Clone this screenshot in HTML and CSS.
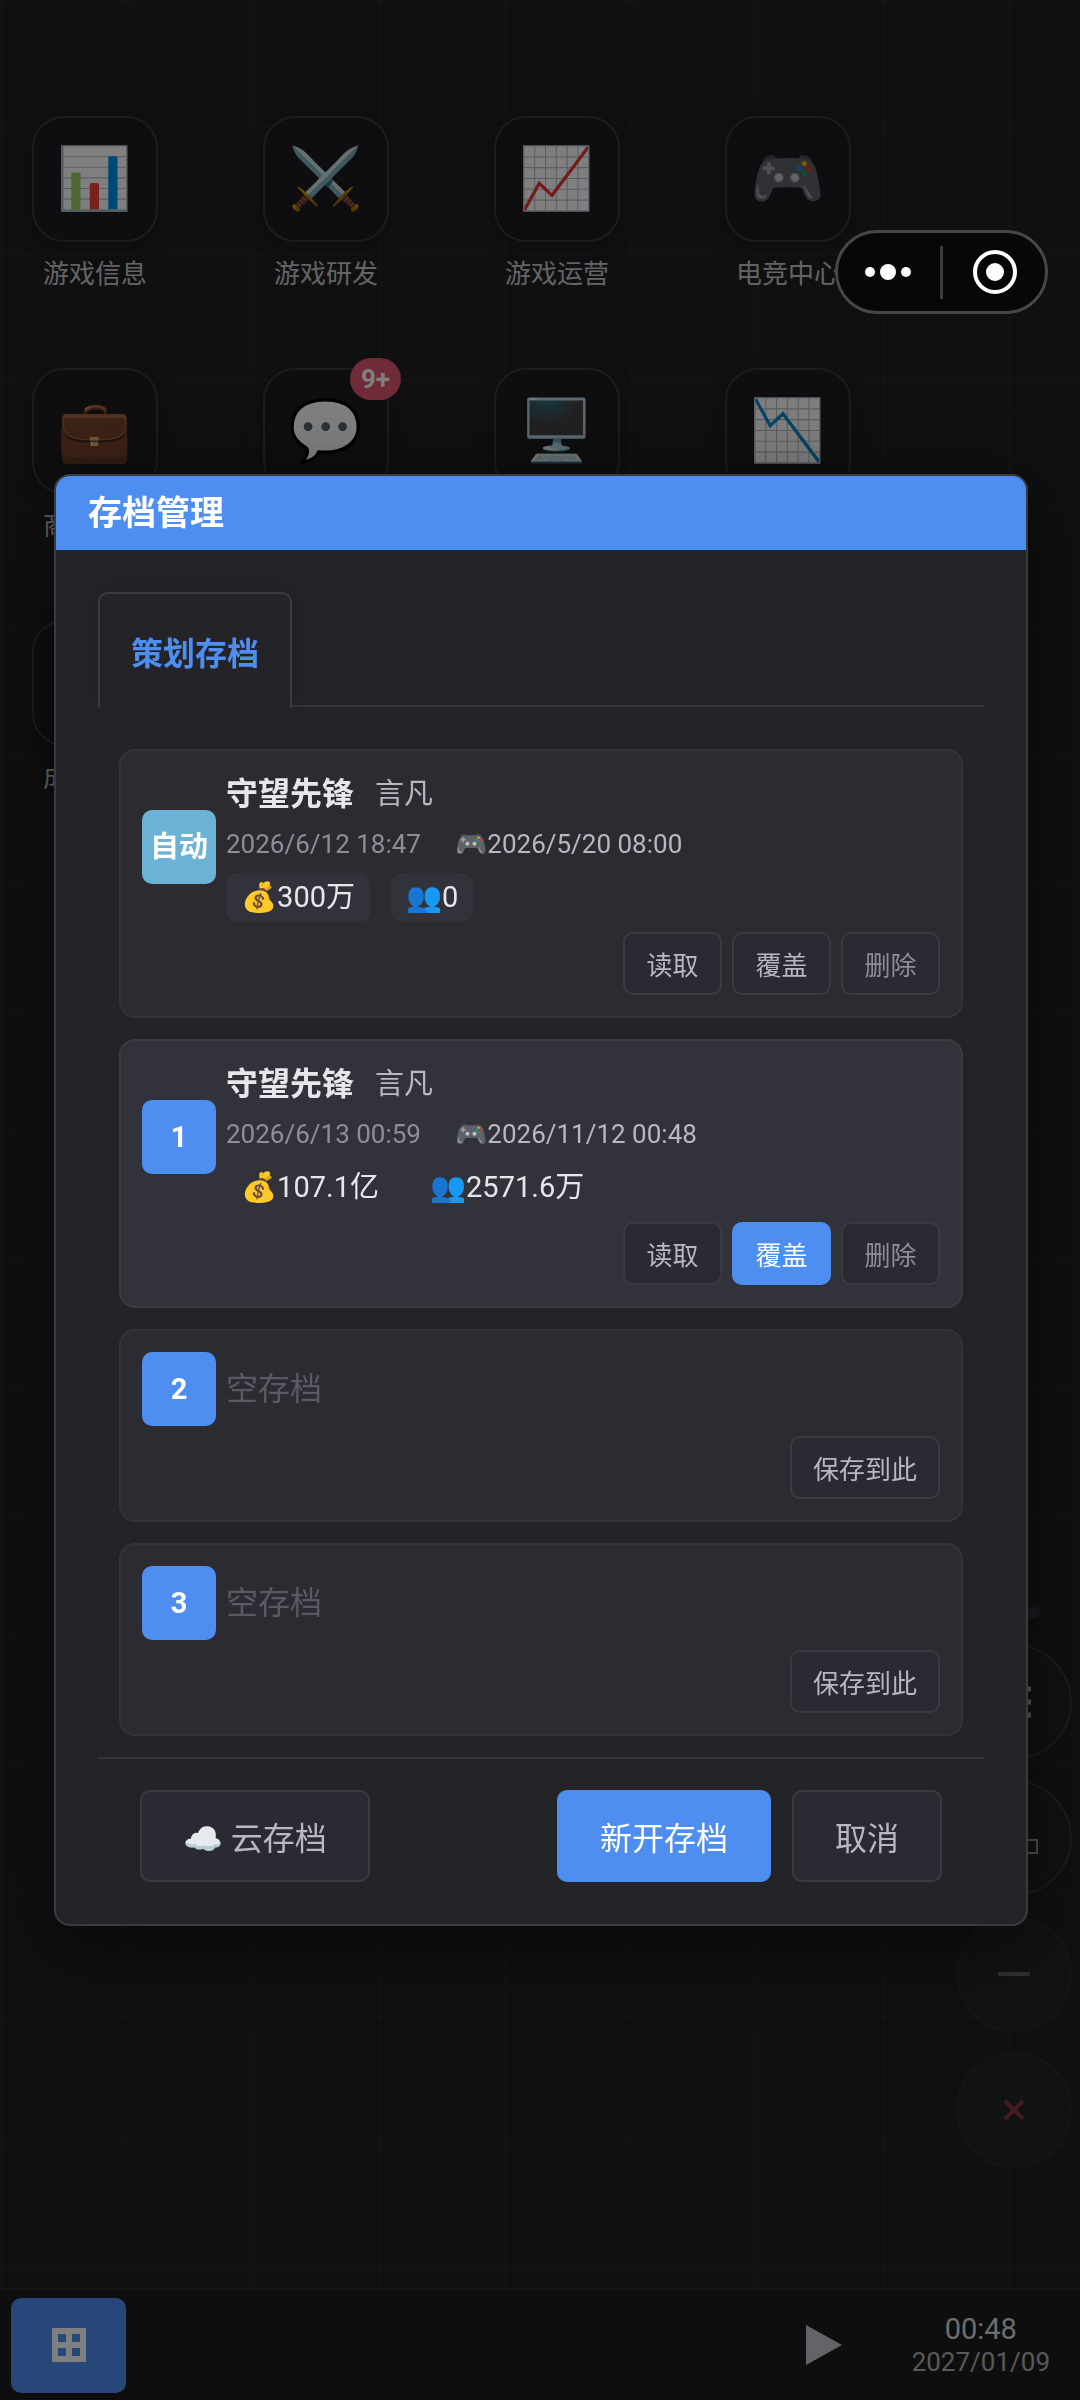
FILE: index.html
```html
<!DOCTYPE html>
<html lang="zh-CN">
<head>
<meta charset="utf-8">
<meta name="viewport" content="width=device-width, initial-scale=1">
<title>存档管理</title>
<link rel="stylesheet" href="styles.css">
</head>
<body>
<div class="screen">
  <main class="desktop">
    <div class="apps">
      <button class="app"><span class="tile">📊</span><span class="app-name">游戏信息</span></button>
      <button class="app"><span class="tile">⚔️</span><span class="app-name">游戏研发</span></button>
      <button class="app"><span class="tile">📈</span><span class="app-name">游戏运营</span></button>
      <button class="app"><span class="tile">🎮</span><span class="app-name">电竞中心</span></button>
      <button class="app"><span class="tile">💼</span><span class="app-name">商业中心</span></button>
      <button class="app"><span class="tile">💬<span class="count">9+</span></span></button>
      <button class="app"><span class="tile">🖥️</span></button>
      <button class="app"><span class="tile">📉</span></button>
      <button class="app"><span class="tile"></span><span class="app-name">成就系统</span></button>
    </div>
  </main>
  <footer class="taskbar">
    <button class="start" aria-label="开始">
      <svg width="34" height="34" viewBox="0 0 34 34"><path d="M0 0h34v34H0zM6 6v8h8V6zM20 6v8h8V6zM6 20v8h8v-8zM20 20v8h8v-8z" fill="#fff" fill-rule="evenodd"/></svg>
    </button>
    <div class="status">
      <button class="play" aria-label="播放"><svg width="36" height="40" viewBox="0 0 36 40"><path d="M0 0L36 20L0 40z" fill="#c9c9d0"/></svg></button>
      <div class="clock"><span class="time">00:48</span><span class="date">2027/01/09</span></div>
    </div>
  </footer>
</div>

<nav class="float-tools" aria-label="窗口工具">
  <span class="handle"></span>
  <button class="tool" aria-label="列表"><svg width="36" height="36" viewBox="0 0 36 36"><path d="M1 5h34M1 18h34M1 31h34" stroke="#b0b0b4" stroke-width="5"/></svg></button>
  <button class="tool" aria-label="排列"><svg width="50" height="50" viewBox="0 0 50 50"><path d="M2 27h13v13H2zM35 27h13v13H35zM18 4h14v13H18z" fill="none" stroke="#a0a0a4" stroke-width="2"/></svg></button>
  <button class="tool faint" aria-label="最小化"><svg width="32" height="4" viewBox="0 0 32 4"><rect width="32" height="4" rx="1" fill="#606064"/></svg></button>
  <button class="tool faint" aria-label="关闭"><svg width="22" height="22" viewBox="0 0 22 22"><path d="M2 2l18 18M20 2L2 20" stroke="#8c3640" stroke-width="4"/></svg></button>
</nav>

<div class="overlay">
  <section class="dialog" role="dialog" aria-labelledby="dialog-title">
    <h1 class="dialog-title" id="dialog-title">存档管理</h1>
    <div class="dialog-body">
      <div class="tabs" role="tablist"><button class="tab" role="tab" aria-selected="true">策划存档</button></div>
      <ul class="saves">
        <li class="save">
          <div class="save-main">
            <span class="slot auto">自动</span>
            <div class="info">
              <div class="names"><strong class="studio">守望先锋</strong><span class="owner">言凡</span></div>
              <div class="dates"><span class="saved-at">2026/6/12 18:47</span><span class="game-date">🎮2026/5/20 08:00</span></div>
              <div class="stats"><span class="stat">💰300万</span><span class="stat">👥0</span></div>
            </div>
          </div>
          <div class="actions"><button class="btn">读取</button><button class="btn">覆盖</button><button class="btn muted">删除</button></div>
        </li>
        <li class="save active">
          <div class="save-main">
            <span class="slot">1</span>
            <div class="info">
              <div class="names"><strong class="studio">守望先锋</strong><span class="owner">言凡</span></div>
              <div class="dates"><span class="saved-at">2026/6/13 00:59</span><span class="game-date">🎮2026/11/12 00:48</span></div>
              <div class="stats"><span class="stat">💰107.1亿</span><span class="stat">👥2571.6万</span></div>
            </div>
          </div>
          <div class="actions"><button class="btn">读取</button><button class="btn primary">覆盖</button><button class="btn muted">删除</button></div>
        </li>
        <li class="save">
          <div class="save-main"><span class="slot">2</span><span class="empty">空存档</span></div>
          <div class="actions"><button class="btn">保存到此</button></div>
        </li>
        <li class="save">
          <div class="save-main"><span class="slot">3</span><span class="empty">空存档</span></div>
          <div class="actions"><button class="btn">保存到此</button></div>
        </li>
      </ul>
      <div class="dialog-footer">
        <button class="btn large cloud">☁️ 云存档</button>
        <button class="btn large primary">新开存档</button>
        <button class="btn large">取消</button>
      </div>
    </div>
  </section>
</div>

<div class="capsule">
  <button class="capsule-btn" aria-label="更多"><svg width="46" height="18" viewBox="0 0 46 18"><g fill="#fff"><circle cx="5" cy="9" r="5"/><circle cx="23" cy="9" r="8"/><circle cx="41" cy="9" r="5"/></g></svg></button>
  <span class="capsule-line"></span>
  <button class="capsule-btn" aria-label="关闭小程序"><svg width="46" height="46" viewBox="0 0 46 46"><circle cx="23" cy="23" r="20" fill="none" stroke="#fff" stroke-width="4"/><circle cx="23" cy="23" r="9" fill="#fff"/></svg></button>
</div>
</body>
</html>
```
FILE: styles.css
```css
* { box-sizing: border-box; }

body {
  margin: 0;
  background: #1e1f23;
  color: #e6e6ec;
  font-family: Roboto, "Noto Sans CJK SC", "Noto Color Emoji", sans-serif;
  font-size: 26px;
}

button {
  margin: 0;
  padding: 0;
  border: 0;
  background: none;
  color: inherit;
  font: inherit;
}

svg { display: block; }

/* Desktop */
.screen {
  display: flex;
  flex-direction: column;
  min-height: 100vh;
}

.desktop {
  flex: 1;
  padding: 116px 32px 0;
  background:
    linear-gradient(rgba(255, 255, 255, 0.02) 3px, transparent 3px) 0 0 / 126px 126px,
    linear-gradient(90deg, rgba(255, 255, 255, 0.02) 3px, transparent 3px) 0 0 / 126px 126px,
    #202023;
}

.apps {
  display: grid;
  grid-template-columns: repeat(4, 126px);
  grid-auto-rows: 210px;
  gap: 42px 105px;
}

.app {
  display: flex;
  flex-direction: column;
  align-items: center;
  gap: 13px;
}

.tile {
  position: relative;
  display: grid;
  place-items: center;
  width: 126px;
  height: 126px;
  border: 2px solid #38393c;
  border-radius: 32px;
  background: #1d1d20;
  box-shadow: 0 6px 20px rgba(0, 0, 0, 0.2);
  color: #fff;
  font-size: 60px;
  line-height: 72px;
}

.count {
  position: absolute;
  top: -12px;
  right: -14px;
  height: 42px;
  padding: 0 11px;
  border-radius: 21px;
  background: #de566f;
  font-size: 26px;
  font-weight: 700;
  line-height: 42px;
}

.app-name {
  color: #c8c8cc;
  line-height: 38px;
  white-space: nowrap;
}

.taskbar {
  display: flex;
  align-items: center;
  justify-content: space-between;
  height: 112px;
  padding: 0 30px 0 11px;
  border-top: 2px solid #2a2b2d;
  background: #1c1c1c;
}

.start {
  display: grid;
  place-items: center;
  width: 115px;
  height: 95px;
  border-radius: 10px;
  background: #4e8ef0;
}

.status {
  display: flex;
  align-items: center;
  gap: 70px;
}

.clock {
  display: flex;
  flex-direction: column;
  align-items: center;
}

.time {
  color: #dadade;
  font-size: 29px;
  line-height: 34px;
}

.date {
  color: #b2b2b6;
  line-height: 32px;
}

/* Round tools at the right edge */
.float-tools {
  position: fixed;
  right: 8px;
  bottom: 232px;
  display: flex;
  flex-direction: column;
  align-items: center;
  gap: 20px;
}

.handle {
  width: 52px;
  height: 11px;
  margin-bottom: 6px;
  border-radius: 6px;
  background: #36373b;
}

.tool {
  display: grid;
  place-items: center;
  width: 116px;
  height: 116px;
  border: 2px solid #38393c;
  border-radius: 50%;
  background: #232427;
}

.tool.faint { border-color: #2a2b2e; }

/* Save dialog */
.overlay {
  position: fixed;
  inset: 0;
  display: flex;
  align-items: center;
  justify-content: center;
  padding: 0 52px 0 54px;
  background: rgba(0, 0, 0, 0.5);
}

.dialog {
  flex: 1;
  overflow: hidden;
  border: 2px solid #3a3a40;
  border-radius: 16px;
  background: #242428;
  box-shadow: 0 16px 80px rgba(0, 0, 0, 0.5);
}

.dialog-title {
  margin: 0;
  padding: 0 32px;
  background: #4e8ef0;
  color: #fff;
  font-size: 34px;
  font-weight: 700;
  line-height: 74px;
}

.dialog-body { padding: 42px; }

.tabs {
  display: flex;
  height: 115px;
  border-bottom: 2px solid #333338;
}

.tab {
  height: 116px;
  padding: 0 31px;
  border: 2px solid #3a3a40;
  border-bottom: 0;
  border-radius: 10px 10px 0 0;
  background: #242428;
  box-shadow: 0 -4px 20px rgba(0, 0, 0, 0.12);
  color: #4e8ef0;
  font-size: 32px;
  font-weight: 600;
}

.saves {
  display: flex;
  flex-direction: column;
  gap: 21px;
  margin: 0;
  padding: 42px 21px 21px;
  list-style: none;
}

.save {
  display: flex;
  flex-direction: column;
  gap: 10px;
  padding: 21px;
  border: 2px solid #333338;
  border-radius: 16px;
  background: #2b2b31;
}

.save.active {
  border-color: #3b3c41;
  background: #32333a;
}

.save-main {
  display: flex;
  align-items: center;
  gap: 10px;
}

.slot {
  flex: none;
  width: 74px;
  border-radius: 10px;
  background: #4e8ef0;
  color: #fff;
  font-size: 29px;
  font-weight: 700;
  line-height: 74px;
  text-align: center;
}

.slot.auto { background: #6cb2d4; }

.info {
  display: flex;
  flex-direction: column;
  gap: 10px;
}

.names, .dates, .stats { display: flex; }

.names {
  gap: 21px;
  line-height: 44px;
}

.studio { font-size: 32px; }

.owner {
  color: #b8b8c2;
  font-size: 29px;
}

.dates {
  gap: 34px;
  line-height: 37px;
}

.saved-at { color: #8e8e98; }

.game-date { color: #b8b8c2; }

.stats {
  gap: 21px;
  font-size: 29px;
  line-height: 49px;
}

.stat {
  padding: 0 15px;
  border-radius: 10px;
  background: #32333a;
}

.empty {
  color: #5a5a64;
  font-size: 32px;
  line-height: 44px;
}

.actions {
  display: flex;
  justify-content: flex-end;
  gap: 10px;
}

.btn {
  min-width: 99px;
  height: 63px;
  padding: 0 21px;
  border: 2px solid #3a3a42;
  border-radius: 10px;
  background: #2b2a32;
  color: #b8b8c2;
}

.btn.muted { color: #8e8e98; }

.btn.large {
  height: 92px;
  padding: 0 41px;
  font-size: 32px;
}

.btn.primary {
  border-color: #4e8ef0;
  background: #4e8ef0;
  color: #fff;
}

.dialog-footer {
  display: flex;
  gap: 21px;
  padding: 31px 42px 0;
  border-top: 2px solid #333338;
}

.btn.cloud { margin-right: auto; }

/* Mini-program capsule */
.capsule {
  position: fixed;
  top: 230px;
  right: 32px;
  display: flex;
  align-items: center;
  width: 213px;
  height: 84px;
  border: 3px solid #474747;
  border-radius: 42px;
  background: #070708;
}

.capsule-btn {
  flex: 1;
  display: grid;
  place-items: center;
}

.capsule-line {
  width: 3px;
  height: 53px;
  margin: 0 2px;
  background: #3c3c3d;
}
```
